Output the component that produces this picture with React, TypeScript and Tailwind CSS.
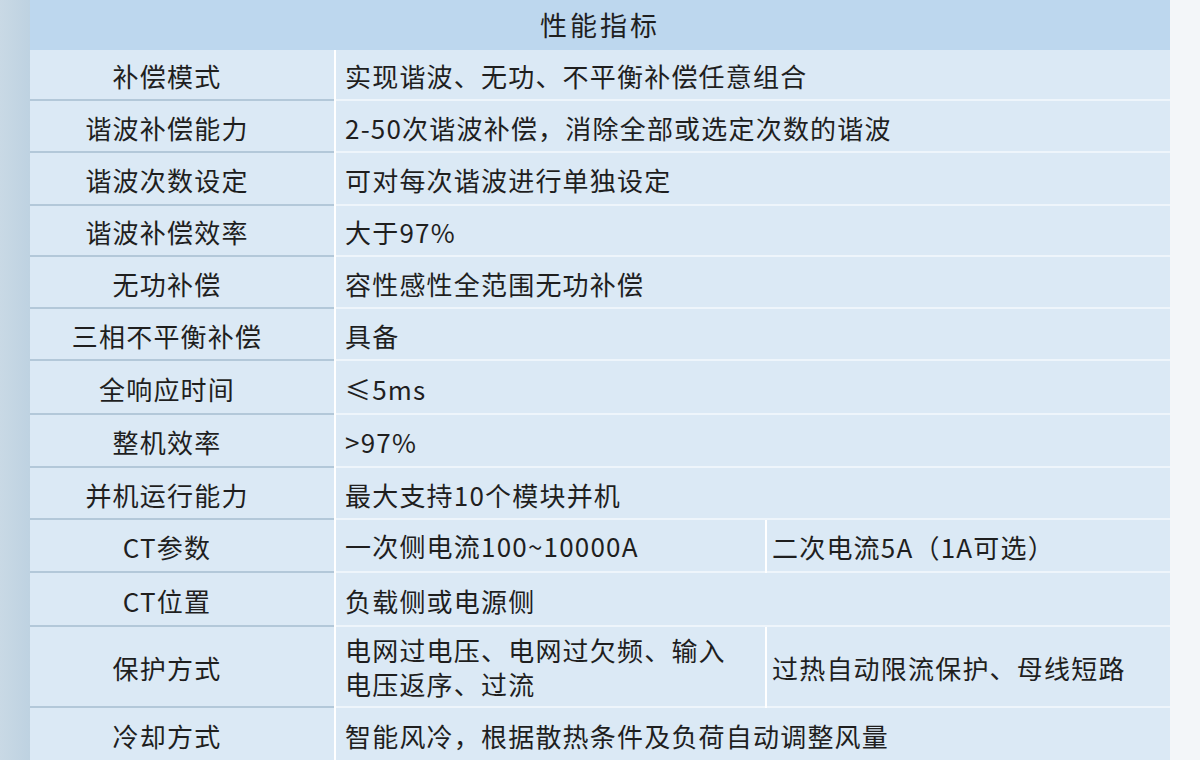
type Row = {
  label: string;
  value: React.ReactNode;
  extra?: string;
  h: string;
  last?: boolean;
};

const rows: Row[] = [
  { label: "补偿模式", value: "实现谐波、无功、不平衡补偿任意组合", h: "h-[51px]" },
  { label: "谐波补偿能力", value: "2-50次谐波补偿，消除全部或选定次数的谐波", h: "h-[52px]" },
  { label: "谐波次数设定", value: "可对每次谐波进行单独设定", h: "h-[53px]" },
  { label: "谐波补偿效率", value: "大于97%", h: "h-[51px]" },
  { label: "无功补偿", value: "容性感性全范围无功补偿", h: "h-[52px]" },
  { label: "三相不平衡补偿", value: "具备", h: "h-[52px]" },
  { label: "全响应时间", value: "≤5ms", h: "h-[54px]" },
  { label: "整机效率", value: ">97%", h: "h-[53px]" },
  { label: "并机运行能力", value: "最大支持10个模块并机", h: "h-[52px]" },
  {
    label: "CT参数",
    value: "一次侧电流100~10000A",
    extra: "二次电流5A（1A可选）",
    h: "h-[53px]",
  },
  { label: "CT位置", value: "负载侧或电源侧", h: "h-[54px]" },
  {
    label: "保护方式",
    value: (
      <>
        电网过电压、电网过欠频、输入
        <br />
        电压返序、过流
      </>
    ),
    extra: "过热自动限流保护、母线短路",
    h: "h-[81px]",
  },
  { label: "冷却方式", value: "智能风冷，根据散热条件及负荷自动调整风量", h: "h-[52px]", last: true },
];

function SpecRow({ row }: { row: Row }) {
  const leftLine = row.last ? "" : "border-b-2 border-[#b3c8d9]";
  const rightLine = row.last ? "" : "border-b-2 border-[#eef5fb]";
  return (
    <div className={`flex ${row.h}`}>
      <div className={`w-[304px] flex items-center justify-center pr-[30px] pt-[2px] ${leftLine}`}>
        {row.label}
      </div>
      <div className="w-[2px] bg-white" />
      {row.extra ? (
        <>
          <div className={`w-[429px] flex items-center pl-[9px] leading-[34px] ${rightLine}`}>
            <div>{row.value}</div>
          </div>
          <div className="w-[2px] bg-white" />
          <div className={`flex-1 flex items-center pl-[5px] pt-[2px] ${rightLine}`}>{row.extra}</div>
        </>
      ) : (
        <div className={`flex-1 flex items-center pl-[9px] pt-[2px] ${rightLine}`}>{row.value}</div>
      )}
    </div>
  );
}

export default function App() {
  return (
    <div
      className="flex w-[1200px] h-[760px] overflow-hidden text-[#1f1f1f] text-[26px] tracking-[1.2px]"
      style={{ fontFamily: '"Noto Sans CJK SC", "Noto Sans", sans-serif' }}
    >
      <div className="w-[30px] bg-gradient-to-r from-[#c9d9e5] to-[#bed2e1]" />
      <div className="w-[1140px] flex flex-col bg-[#dbe9f5]">
        <div className="h-[50px] bg-[#bdd7ee] flex items-center justify-center text-[27px] tracking-[3px]">
          性能指标
        </div>
        {rows.map((r) => (
          <SpecRow key={r.label} row={r} />
        ))}
      </div>
      <div className="flex-1 bg-[#f3f6f9]" />
    </div>
  );
}
